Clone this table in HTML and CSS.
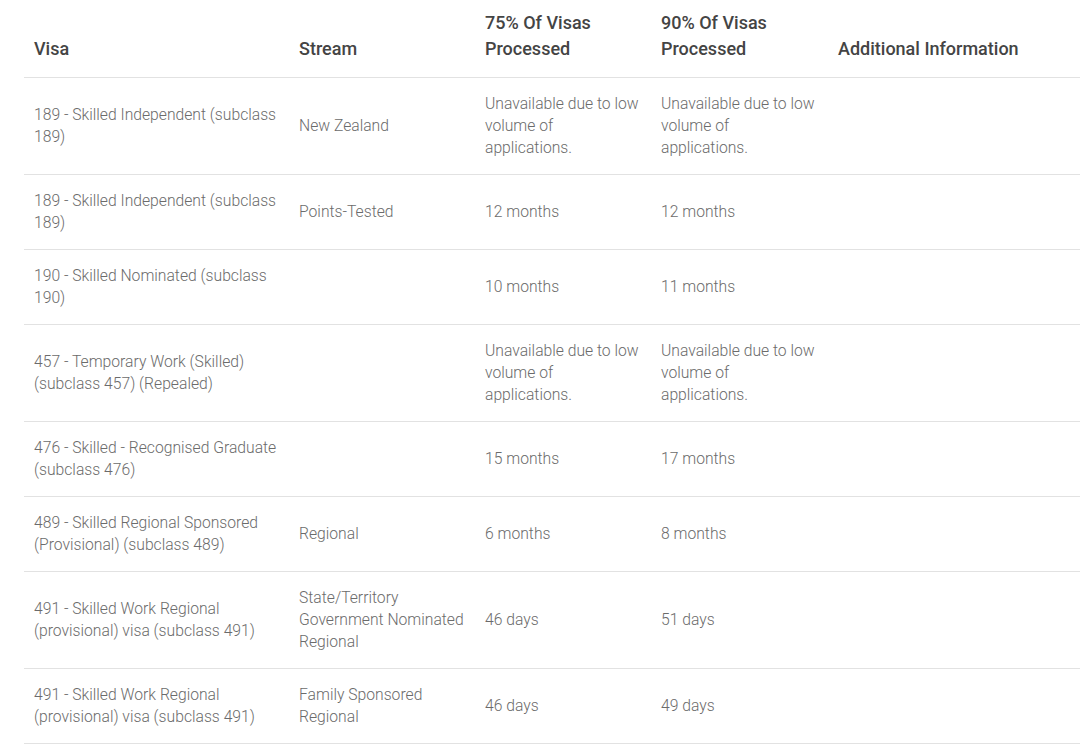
FILE: index.html
```html
<!DOCTYPE html>
<html lang="en">
<head>
<meta charset="utf-8">
<title>Visa processing times</title>
<link rel="stylesheet" href="styles.css">
</head>
<body>
<div class="wrap">
<table class="visa-table">
  <colgroup>
    <col class="c1"><col class="c2"><col class="c3"><col class="c4"><col class="c5">
  </colgroup>
  <thead>
    <tr>
      <th>Visa</th>
      <th>Stream</th>
      <th>75% Of Visas Processed</th>
      <th>90% Of Visas Processed</th>
      <th>Additional Information</th>
    </tr>
  </thead>
  <tbody>
    <tr>
      <td>189 - Skilled Independent (subclass 189)</td>
      <td>New Zealand</td>
      <td>Unavailable due to low volume of applications.</td>
      <td>Unavailable due to low volume of applications.</td>
      <td></td>
    </tr>
    <tr>
      <td>189 - Skilled Independent (subclass 189)</td>
      <td>Points-Tested</td>
      <td>12 months</td>
      <td>12 months</td>
      <td></td>
    </tr>
    <tr>
      <td>190 - Skilled Nominated (subclass 190)</td>
      <td></td>
      <td>10 months</td>
      <td>11 months</td>
      <td></td>
    </tr>
    <tr>
      <td>457 - Temporary Work (Skilled) (subclass 457) (Repealed)</td>
      <td></td>
      <td>Unavailable due to low volume of applications.</td>
      <td>Unavailable due to low volume of applications.</td>
      <td></td>
    </tr>
    <tr>
      <td>476 - Skilled - Recognised Graduate (subclass 476)</td>
      <td></td>
      <td>15 months</td>
      <td>17 months</td>
      <td></td>
    </tr>
    <tr>
      <td>489 - Skilled Regional Sponsored (Provisional) (subclass 489)</td>
      <td>Regional</td>
      <td>6 months</td>
      <td>8 months</td>
      <td></td>
    </tr>
    <tr>
      <td>491 - Skilled Work Regional (provisional) visa (subclass 491)</td>
      <td>State/Territory Government Nominated Regional</td>
      <td>46 days</td>
      <td>51 days</td>
      <td></td>
    </tr>
    <tr>
      <td>491 - Skilled Work Regional (provisional) visa (subclass 491)</td>
      <td>Family Sponsored Regional</td>
      <td>46 days</td>
      <td>49 days</td>
      <td></td>
    </tr>
  </tbody>
</table>
</div>
</body>
</html>
```
FILE: styles.css
```css
html, body {
  margin: 0;
  padding: 0;
  background: #fff;
}
body {
  overflow: hidden;
  font-family: Roboto, "Liberation Sans", sans-serif;
}
.wrap {
  padding-left: 24px;
  width: 1200px;
}
.visa-table {
  border-collapse: collapse;
  table-layout: fixed;
  width: 1150px;
}
.c1 { width: 265px; }
.c2 { width: 186px; }
.c3 { width: 176px; }
.c4 { width: 177px; }
.c5 { width: 346px; }
.visa-table th {
  text-align: left;
  vertical-align: bottom;
  font-weight: 500;
  font-size: 18px;
  line-height: 26px;
  color: #444;
  padding: 10px 10px 15px 10px;
  border-bottom: 1px solid #e2e2e2;
}
.visa-table td {
  vertical-align: middle;
  font-weight: 300;
  font-size: 15.7px;
  line-height: 22px;
  color: #6b6b6b;
  padding: 15px 10px;
  border-bottom: 1px solid #e2e2e2;
}
```
